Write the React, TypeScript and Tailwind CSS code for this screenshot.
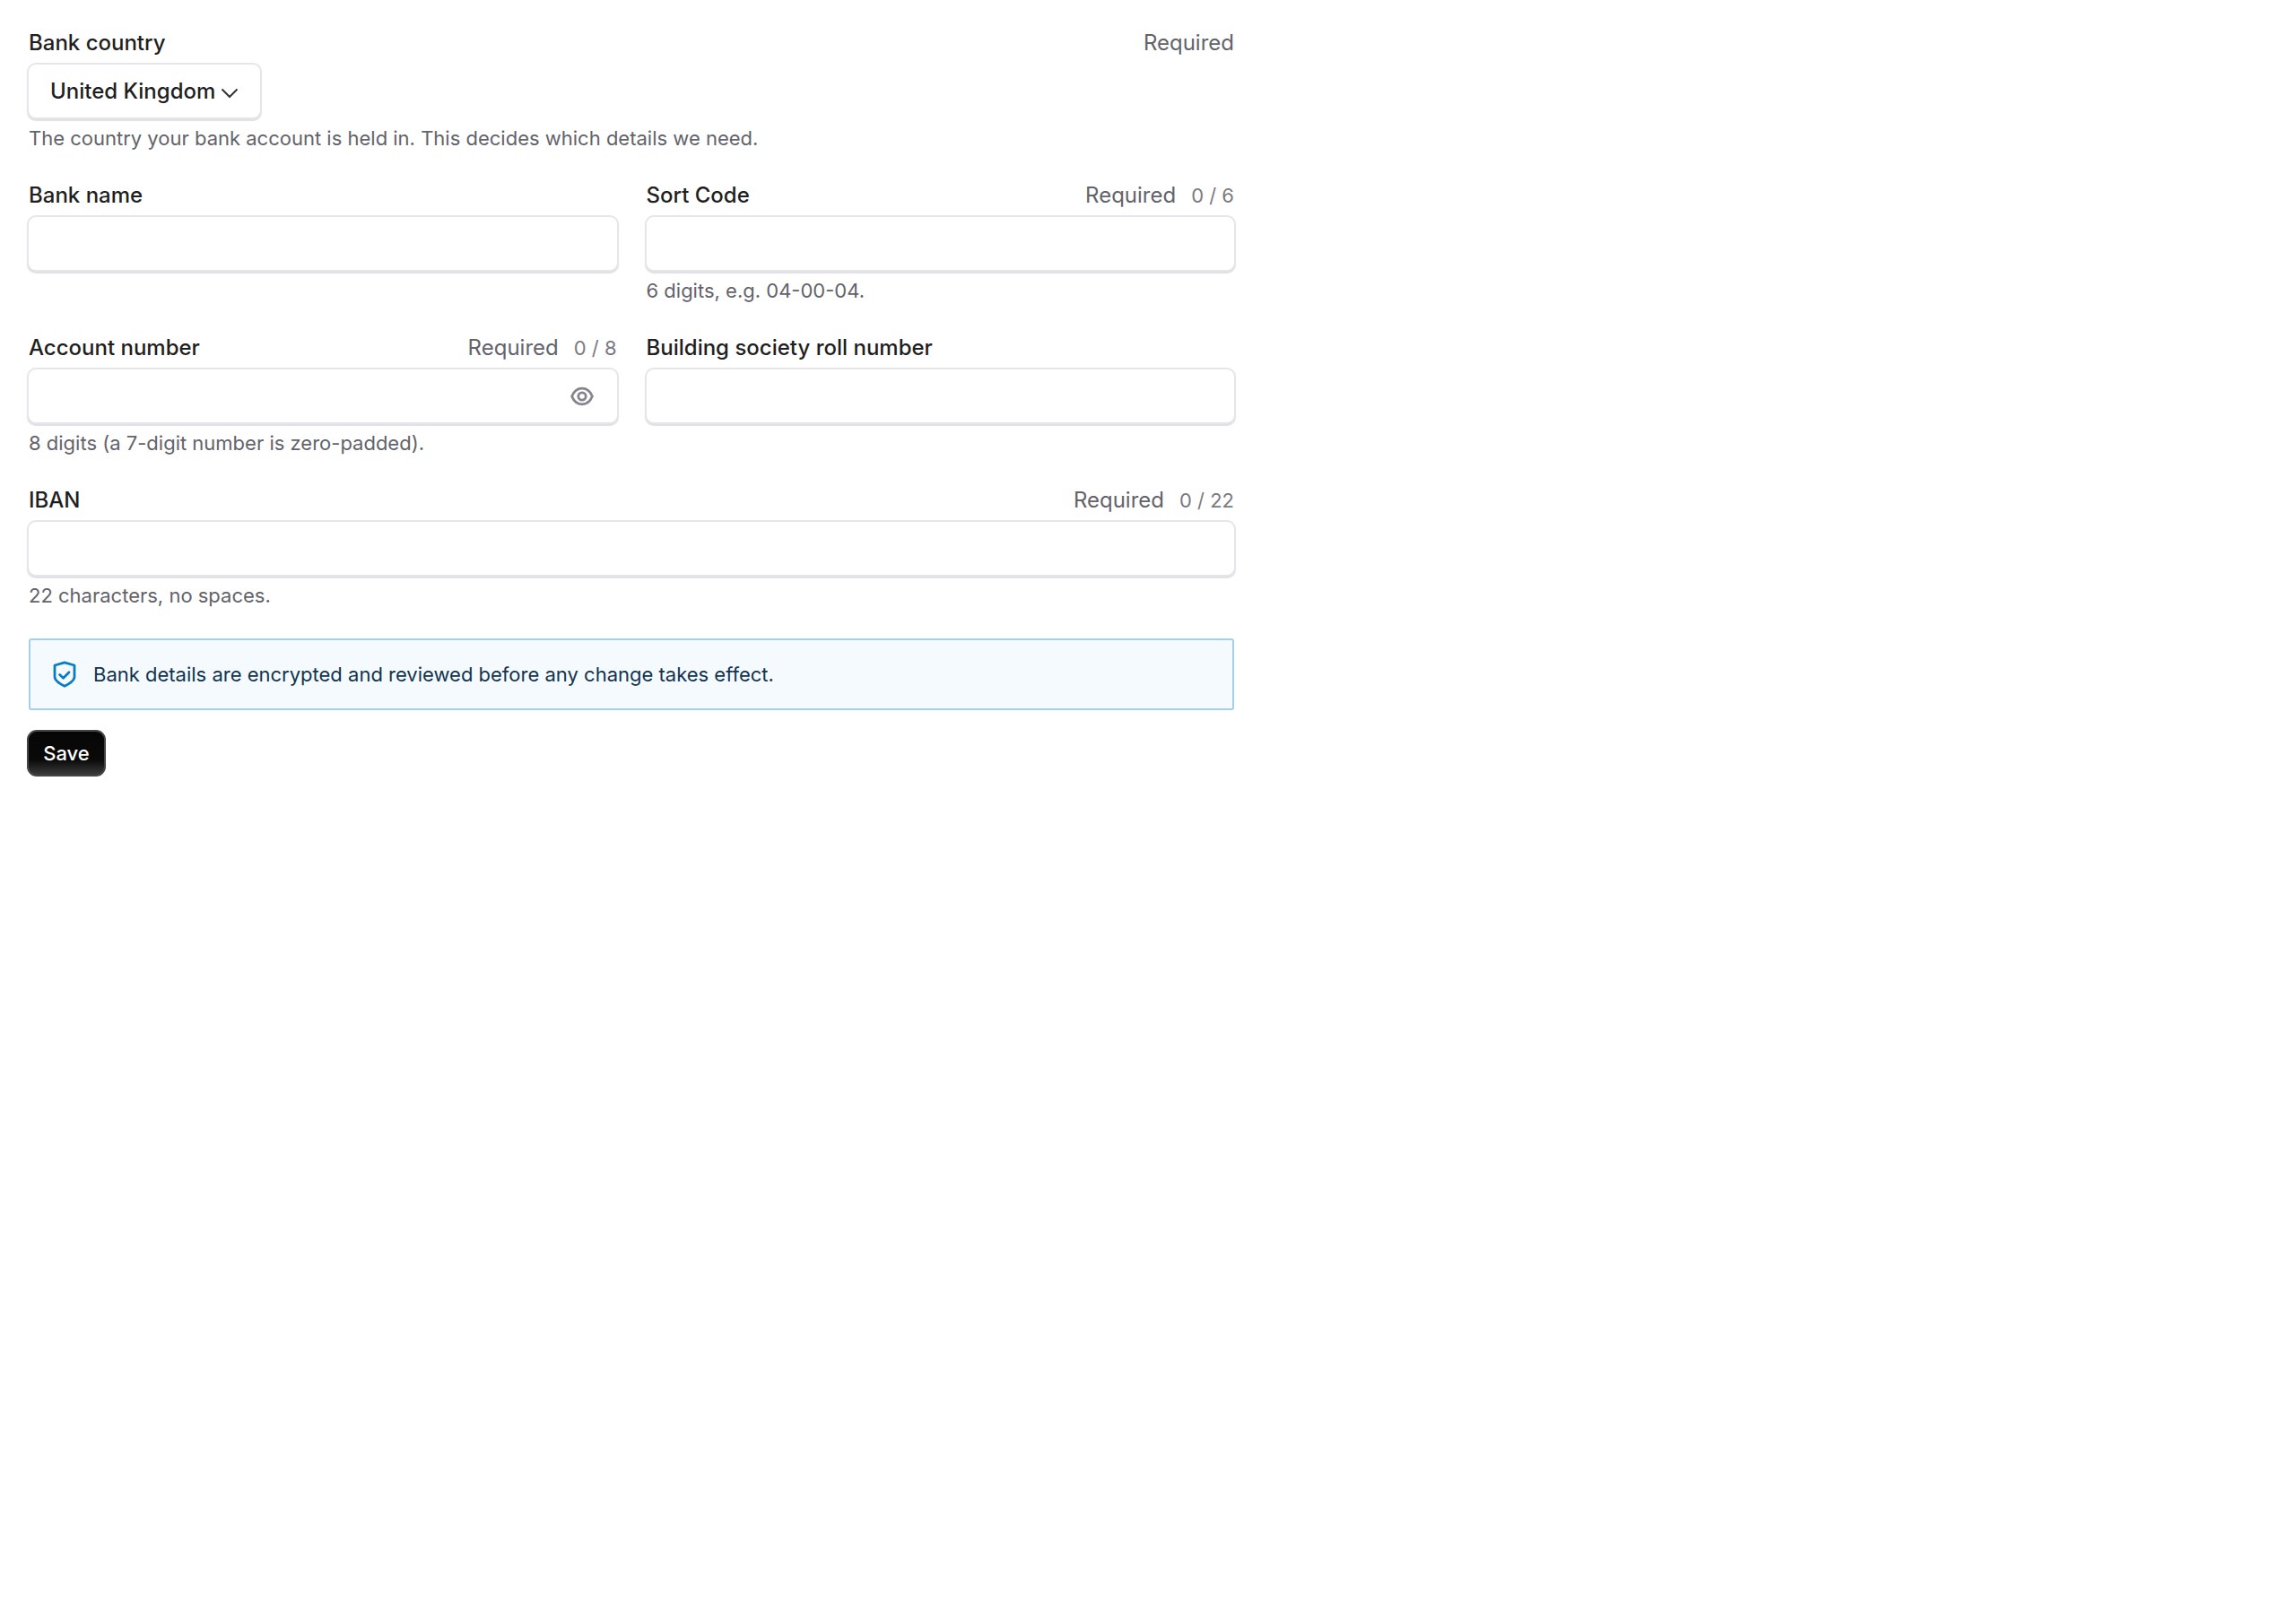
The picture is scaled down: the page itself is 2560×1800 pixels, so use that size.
const font = { fontFamily: "Inter, 'Noto Sans', sans-serif" };

function Label({ text, req, count }: { text: string; req?: boolean; count?: string }) {
  return (
    <div className="flex h-[34px] items-center justify-between pl-[2px] pr-[2px] pt-[2px] mb-[6px]">
      <span className="text-[24px] font-medium leading-[32px] text-[#1f1f22]">{text}</span>
      <span className="flex items-center gap-[17px]">
        {req && <span className="text-[24px] leading-[32px] text-[#63636b]">Required</span>}
        {count && <span className="text-[22px] leading-[32px] text-[#7a7a82]">{count}</span>}
      </span>
    </div>
  );
}

function Box({ children, className = "" }: { children?: React.ReactNode; className?: string }) {
  return (
    <div className={"h-[63px] rounded-[10px] border-2 border-[#e6e6ea] bg-white shadow-[0_2px_1px_rgba(60,60,80,0.16)] " + className}>
      {children}
    </div>
  );
}

function Hint({ children }: { children: React.ReactNode }) {
  return <p className="mt-[6px] h-[29px] pl-[2px] text-[22px] leading-[30px] text-[#63636b]">{children}</p>;
}

function EyeIcon() {
  return (
    <svg width="26" height="22" viewBox="0 0 26 22" fill="none" stroke="#85858d" strokeWidth="2.8">
      <path d="M1.6 11C4 5.2 8 2.2 13 2.2S22 5.2 24.4 11C22 16.8 18 19.8 13 19.8S4 16.8 1.6 11Z" />
      <circle cx="13" cy="11" r="4.2" />
    </svg>
  );
}

function ShieldIcon() {
  return (
    <svg width="26" height="30" viewBox="0 0 26 30" fill="none" stroke="#0a7cc1" strokeWidth="2.8" strokeLinejoin="round" strokeLinecap="round">
      <path d="M13 1.8 24 5V18C24 21.5 18.5 25.5 13 28.2 7.5 25.5 2 21.5 2 18V5Z" />
      <path d="M7.6 15.4 11.6 19.2 18 12.8" />
    </svg>
  );
}

export default function App() {
  return (
    <div className="min-h-[1800px] bg-white" style={font}>
      <div className="w-[1348px] ml-[30px] pt-[30px]">
        <div className="mb-[32px]">
          <Label text="Bank country" req />
          <Box className="w-[262px] flex items-center pl-[24px] gap-[6px]">
            <span className="text-[24px] font-medium text-[#1f1f22]">United Kingdom</span>
            <svg width="20" height="12" viewBox="0 0 20 12" fill="none" stroke="#33333a" strokeWidth="2" className="mt-[4px]">
              <path d="M1.5 1.5 10 10 18.5 1.5" />
            </svg>
          </Box>
          <Hint>The country your bank account is held in. This decides which details we need.</Hint>
        </div>

        <div className="grid grid-cols-2 gap-x-[29px] gap-y-[32px]">
          <div>
            <Label text="Bank name" />
            <Box />
          </div>
          <div>
            <Label text="Sort Code" req count="0 / 6" />
            <Box />
            <Hint>6 digits, e.g. 04-00-04.</Hint>
          </div>
          <div>
            <Label text="Account number" req count="0 / 8" />
            <Box className="flex items-center justify-end pr-[26px]">
              <EyeIcon />
            </Box>
            <Hint>8 digits (a 7-digit number is zero-padded).</Hint>
          </div>
          <div>
            <Label text="Building society roll number" />
            <Box />
          </div>
          <div className="col-span-2">
            <Label text="IBAN" req count="0 / 22" />
            <Box />
            <Hint>22 characters, no spaces.</Hint>
          </div>
        </div>

        <div className="mt-[34px] ml-[2px] mr-[2px] flex h-[80px] items-center gap-[19px] rounded-[3px] border-2 border-[#a3d0ef] bg-[#f5fafe] pl-[25px]">
          <ShieldIcon />
          <span className="text-[22px] text-[#12344f]">Bank details are encrypted and reviewed before any change takes effect.</span>
        </div>

        <button className="mt-[22px] flex h-[52px] w-[88px] items-center justify-center rounded-[11px] border-2 border-[#444444] bg-[linear-gradient(180deg,#060606_0%,#0a0a0a_65%,#3a3a3a_100%)] text-[22px] font-medium text-white">
          Save
        </button>
      </div>
    </div>
  );
}
